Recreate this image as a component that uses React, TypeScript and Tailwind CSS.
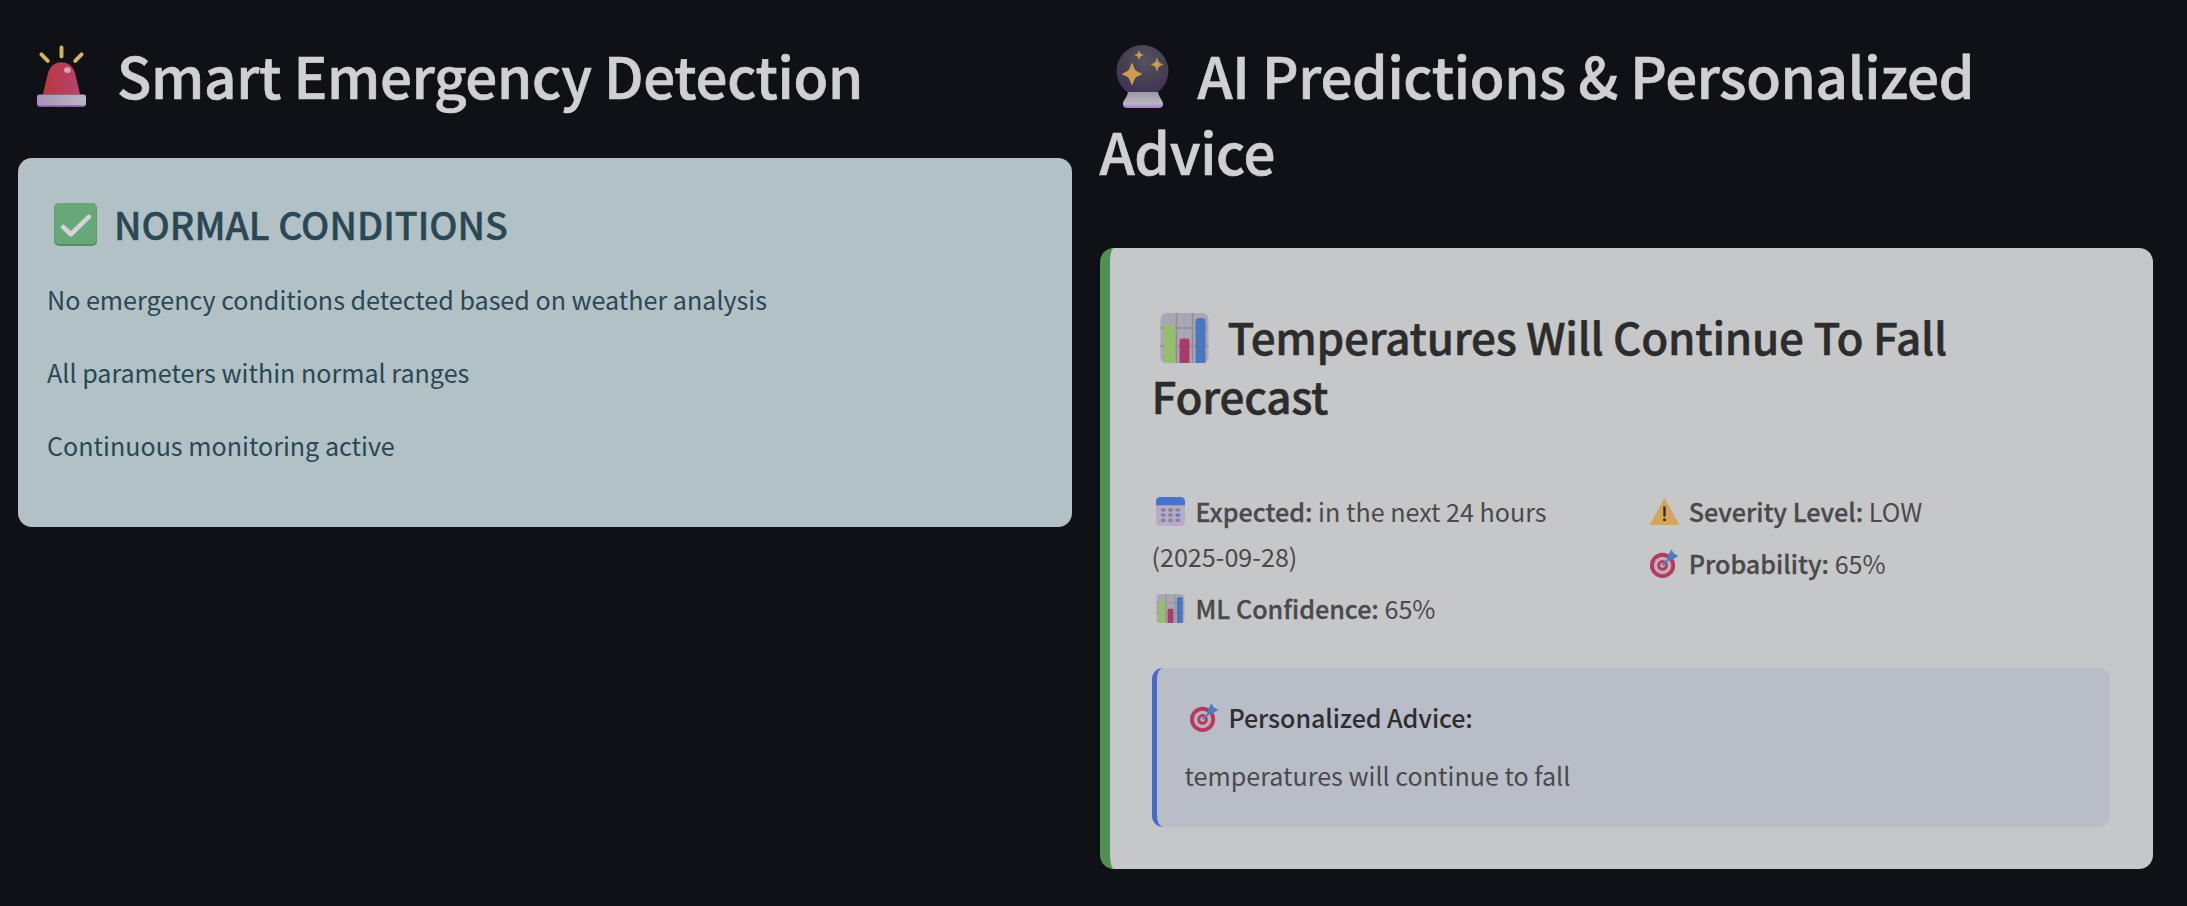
import React from "react";

const FONT = "font-['Noto_Sans_CJK_SC','Noto_Sans',sans-serif]";

function Alarm({ className }: { className: string }) {
  return (
    <svg viewBox="0 0 50 62" className={className}>
      <defs>
        <linearGradient id="al1" x1="0" x2="1" y1="0" y2="0">
          <stop offset="0" stopColor="#b8383e" />
          <stop offset="1" stopColor="#b8436e" />
        </linearGradient>
        <linearGradient id="al2" x1="0" x2="1" y1="0" y2="0">
          <stop offset="0" stopColor="#a594b8" />
          <stop offset="1" stopColor="#bcb6c6" />
        </linearGradient>
      </defs>
      <g stroke="#d2b45a" strokeWidth="4" strokeLinecap="round">
        <path d="M25 2V11" />
        <path d="M4.500 9L11 15.500" />
        <path d="M45.500 9L39 15.500" />
      </g>
      <path d="M6 50L11 29C13 21 18 17 25 17C32 17 37 21 39 29L44 50Z" fill="url(#al1)" />
      <ellipse cx="31" cy="25" rx="3.500" ry="3" fill="#d8a4ae" />
      <rect x="0" y="50" width="50" height="12" rx="2.500" fill="url(#al2)" />
      <rect x="1" y="60.500" width="48" height="1.500" rx="0.700" fill="#a06cc0" />
    </svg>
  );
}

function Ball({ className }: { className: string }) {
  return (
    <svg viewBox="0 0 54 64" className={className}>
      <defs>
        <radialGradient id="bl1" cx="0.55" cy="0.3" r="0.8">
          <stop offset="0" stopColor="#55525c" />
          <stop offset="0.6" stopColor="#443c52" />
          <stop offset="1" stopColor="#3e2a5c" />
        </radialGradient>
        <linearGradient id="bl2" x1="0" x2="0" y1="0" y2="1">
          <stop offset="0" stopColor="#9d98a6" />
          <stop offset="0.75" stopColor="#b8b4c2" />
          <stop offset="1" stopColor="#a87ac8" />
        </linearGradient>
      </defs>
      <circle cx="26.500" cy="26" r="26" fill="url(#bl1)" />
      <path d="M12 47H42C43 53 47 55 47 59C47 62 45 63 43 63H11C9 63 7 62 7 59C7 55 11 53 12 47Z" fill="url(#bl2)" />
      <path d="M16 19C17.500 25 19 27 25 29C19 31 17.500 33 16 39C14.500 33 13 31 7 29C13 27 14.500 25 16 19Z" fill="#cf9c50" strokeLinejoin="round" stroke="#cf9c50" strokeWidth="1.500" />
      <path d="M41 13.500C41.500 17 43 18.500 46.500 19.500C43 20.500 41.500 22 41 25.500C40.500 22 39 20.500 35.500 19.500C39 18.500 40.500 17 41 13.500Z" fill="#cf9c50" strokeLinejoin="round" stroke="#cf9c50" strokeWidth="1" />
      <path d="M23 6C23.500 8.500 24.500 9.500 27 10C24.500 10.500 23.500 11.500 23 14C22.500 11.500 21.500 10.500 19 10C21.500 9.500 22.500 8.500 23 6Z" fill="#cf9c50" strokeLinejoin="round" stroke="#cf9c50" strokeWidth="0.800" />
    </svg>
  );
}

function Check({ className }: { className: string }) {
  return (
    <svg viewBox="0 0 42 42" className={className}>
      <rect x="0" y="0" width="42" height="42" rx="5" fill="#52945f" />
      <rect x="0.500" y="0" width="41" height="40" rx="5" fill="#68a878" />
      <path d="M9 23.500L16.500 30.500L34 13.500" fill="none" stroke="#d5d2d8" strokeWidth="4.500" strokeLinecap="round" strokeLinejoin="round" />
    </svg>
  );
}

function Chart({ className }: { className: string }) {
  return (
    <svg viewBox="0 0 48 50" className={className}>
      <rect x="0" y="0" width="48" height="50" rx="6" fill="#aaa6b4" />
      <path d="M16 0V50M32 0V50M0 15H48M0 33H48" stroke="#8f8c96" strokeWidth="1.500" />
      <path d="M3.500 50V15C3.500 13 5 12 7 12H11C13 12 14.500 13 14.500 15V50Z" fill="#93c068" />
      <path d="M19 50V28C19 26.500 20 25.500 22 25.500H26C28 25.500 29 26.500 29 28V50Z" fill="#ab3a66" />
      <path d="M35 50V8C35 6 36.500 5 38.500 5H41.500C43.500 5 45 6 45 8V50Z" fill="#4a78c0" />
    </svg>
  );
}

function Calendar({ className }: { className: string }) {
  return (
    <svg viewBox="0 0 28 28" className={className}>
      <rect x="0" y="0" width="28" height="28" rx="4" fill="#b7abcb" />
      <path d="M0 8V4C0 1.800 1.800 0 4 0H24C26.200 0 28 1.800 28 4V8Z" fill="#4673cc" />
      <g fill="#84808e">
        <rect x="5" y="11" width="4" height="3" />
        <rect x="12" y="11" width="4" height="3" />
        <rect x="19" y="11" width="4" height="3" />
        <rect x="5" y="16" width="4" height="3" />
        <rect x="12" y="16" width="4" height="3" />
        <rect x="5" y="21" width="4" height="3" />
        <rect x="12" y="21" width="4" height="3" />
        <rect x="19" y="21" width="4" height="3" />
      </g>
      <rect x="19" y="16" width="4" height="3" fill="#4a80d0" />
    </svg>
  );
}

function Warning({ className }: { className: string }) {
  return (
    <svg viewBox="0 0 28 26" className={className}>
      <path d="M14 1L27.500 25.500H0.500Z" fill="#d6a45a" stroke="#d6a45a" strokeLinejoin="round" />
      <rect x="12.800" y="8" width="2.400" height="10" rx="1" fill="#333" />
      <circle cx="14" cy="21" r="1.500" fill="#333" />
    </svg>
  );
}

function Target({ className }: { className: string }) {
  return (
    <svg viewBox="0 0 30 30" className={className}>
      <circle cx="13" cy="17" r="13" fill="#b8385e" />
      <circle cx="13" cy="17" r="9" fill="#b7b3bf" />
      <circle cx="13" cy="17" r="5.500" fill="#b8385e" />
      <circle cx="13" cy="17" r="2.500" fill="#b7b3bf" />
      <path d="M13 17L24 6" stroke="#4a7cc4" strokeWidth="2" />
      <path d="M18 8L22 0.500L25 5L29.500 7L22 12Z" fill="#4a7cc4" />
    </svg>
  );
}

export default function App() {
  return (
    <div className={`${FONT} min-h-[906px] bg-[#0f1116] pl-[18px] pr-[34px] pt-[36px]`}>
      <div className="grid grid-cols-2 gap-[28px] items-start">
        <div>
          <h2 className="h-[122px] text-[56.500px] leading-[76px] font-medium text-[#d0d0d2] [-webkit-text-stroke:0.7px_#d0d0d2] pl-[19px] tracking-[-0.3px]">
            <Alarm className="inline-block w-[49px] h-[62px] align-[-8px] mr-[31px]" />
            Smart Emergency Detection
          </h2>
          <div className="h-[369px] rounded-[14px] bg-[#b2c1c6] px-[29px] pt-[40px] text-[#2a4753]">
            <div className="flex items-center h-[52px] text-[37.500px] font-medium [-webkit-text-stroke:0.4px_#2a4753] pl-[7px]">
              <Check className="w-[43px] h-[43px] mr-[17px]" />
              NORMAL CONDITIONS
            </div>
            <p className="mt-[29px] text-[25.100px] leading-[40px]">No emergency conditions detected based on weather analysis</p>
            <p className="mt-[33px] text-[25.100px] leading-[40px]">All parameters within normal ranges</p>
            <p className="mt-[33px] text-[25.100px] leading-[40px]">Continuous monitoring active</p>
          </div>
        </div>
        <div>
          <h2 className="h-[212px] text-[56.500px] leading-[76px] font-medium text-[#d0d0d2] [-webkit-text-stroke:0.7px_#d0d0d2] tracking-[-0.3px]">
            <Ball className="inline-block w-[54px] h-[64px] align-[-10px] ml-[16px] mr-[28px]" />
            AI Predictions &amp; Personalized Advice
          </h2>
          <div className="h-[621px] rounded-[14px] border-l-[10px] border-[#4f9150] bg-[#c6c7c9] pl-[42px] pr-[43px] pt-[59px]">
            <h3 className="text-[44px] leading-[59px] font-medium text-[#2c2c2c] [-webkit-text-stroke:0.5px_#2c2c2c] tracking-[-0.25px]">
              <Chart className="inline-block w-[49px] h-[50px] align-[-8px] ml-[8px] mr-[19px]" />
              Temperatures Will Continue To Fall Forecast
            </h3>
            <div className="mt-[64px] grid grid-cols-2 gap-x-[28px] text-[25.100px] text-[#4a4a4c]">
              <div>
                <p className="leading-[45px]">
                  <Calendar className="inline-block w-[29px] h-[29px] align-[-4px] ml-[4px] mr-[11px]" />
                  <b className="font-medium [-webkit-text-stroke:0.3px_#4a4a4c]">Expected:</b> in the next 24 hours (2025-09-28)
                </p>
                <p className="mt-[7px] leading-[45px]">
                  <Chart className="inline-block w-[29px] h-[29px] align-[-4px] ml-[4px] mr-[11px]" />
                  <b className="font-medium [-webkit-text-stroke:0.3px_#4a4a4c]">ML Confidence:</b> 65%
                </p>
              </div>
              <div>
                <p className="leading-[45px]">
                  <Warning className="inline-block w-[29px] h-[27px] align-[-3px] ml-[5px] mr-[10px]" />
                  <b className="font-medium [-webkit-text-stroke:0.3px_#4a4a4c]">Severity Level:</b> LOW
                </p>
                <p className="mt-[7px] leading-[45px]">
                  <Target className="inline-block w-[29px] h-[29px] align-[-4px] ml-[5px] mr-[10px]" />
                  <b className="font-medium [-webkit-text-stroke:0.3px_#4a4a4c]">Probability:</b> 65%
                </p>
              </div>
            </div>
            <div className="mt-[37px] h-[159px] rounded-[11px] border-l-[5px] border-[#4a69cc] bg-[#b9bdc8] pl-[28px] pt-[29px]">
              <p className="text-[25.100px] leading-[40px] font-medium text-[#2e2e30] tracking-[-0.1px]">
                <Target className="inline-block w-[29px] h-[29px] align-[-4px] ml-[5px] mr-[10px]" />
                Personalized Advice:
              </p>
              <p className="mt-[18px] text-[25.100px] leading-[40px] text-[#4a4a4c]">temperatures will continue to fall</p>
            </div>
          </div>
        </div>
      </div>
    </div>
  );
}
